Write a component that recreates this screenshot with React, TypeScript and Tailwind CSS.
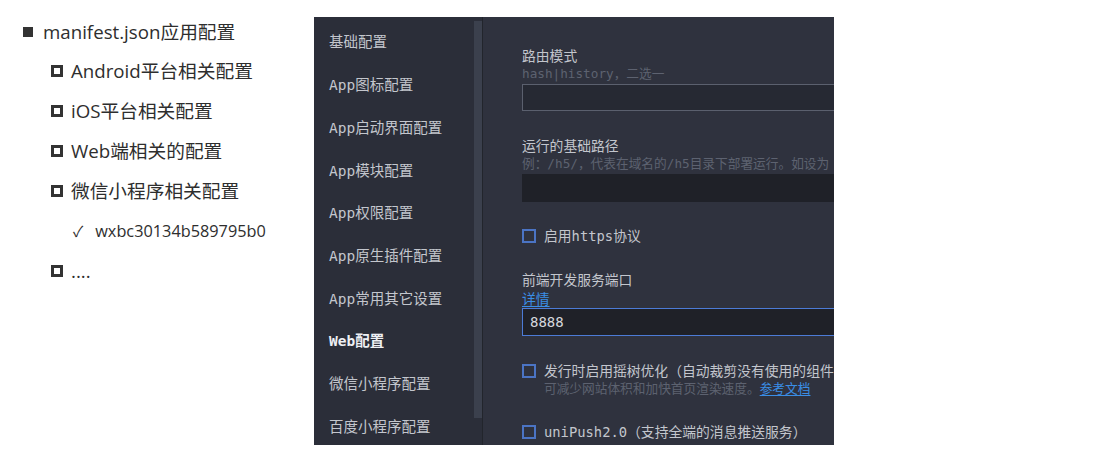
const sans = "font-['Open_Sans','Noto_Sans_CJK_SC',sans-serif]";
const mono = "font-['DejaVu_Sans_Mono','Noto_Sans_CJK_SC',monospace]";

const subItems = ['Android平台相关配置', 'iOS平台相关配置', 'Web端相关的配置', '微信小程序相关配置'];

const menu = [
  '基础配置',
  'App图标配置',
  'App启动界面配置',
  'App模块配置',
  'App权限配置',
  'App原生插件配置',
  'App常用其它设置',
  'Web配置',
  '微信小程序配置',
  '百度小程序配置',
];

function Box() {
  return <span className="inline-block w-[14px] h-[14px] border-2 border-[#4b74c4] shrink-0" />;
}

function Outline() {
  return <span className="inline-block w-[12px] h-[12px] border-[3px] border-[#333] shrink-0" />;
}

export default function App() {
  return (
    <div className="w-[1118px] h-[470px] bg-white flex overflow-hidden">
      {/* slide bullet list */}
      <div className={`w-[314px] shrink-0 pt-[19px] pl-[23px] text-[#2e2e2e] ${sans}`}>
        <div className="flex items-center gap-[10px] h-[26px] text-[18.7px]">
          <span className="inline-block w-[10px] h-[10px] bg-[#333]" />
          <span>manifest.json应用配置</span>
        </div>
        <div className="pl-[28px] mt-[13px] flex flex-col">
          {subItems.map(t => (
            <div key={t} className="flex items-center gap-[8px] h-[26px] mb-[14px] text-[18.7px]">
              <Outline />
              <span>{t}</span>
            </div>
          ))}
          <div className="flex items-center gap-[12px] h-[26px] mb-[14px] pl-[22px] text-[16.3px]">
            <span className="text-[15px]">✓</span>
            <span>wxbc30134b589795b0</span>
          </div>
          <div className="flex items-center gap-[8px] h-[26px] text-[18.7px]">
            <Outline />
            <span>....</span>
          </div>
        </div>
      </div>

      {/* screenshot of the HBuilderX manifest editor */}
      <div className={`mt-[17px] w-[520px] h-[428px] flex bg-[#2f323e] overflow-hidden ${mono}`}>
        <div className="w-[160px] shrink-0 bg-[#2b2e39] pl-[15px] pt-[5px] flex flex-col overflow-hidden">
          {menu.map(m => (
            <div
              key={m}
              className={`h-[42.7px] shrink-0 flex items-center text-[14.5px] whitespace-nowrap ${
                m === 'Web配置' ? 'text-[#eef0f4] font-bold' : 'text-[#c3c6cd]'
              }`}
            >
              {m}
            </div>
          ))}
        </div>
        <div className="w-[8px] shrink-0 bg-[#2b2e39] pt-[4px] pb-[27px] flex">
          <div className="w-full bg-[#3b404d]" />
        </div>
        <div className="w-px shrink-0 bg-[#22252c]" />
        <div className="flex-1 min-w-0 pl-[39px] pt-[30px] text-[#c3c6cd] text-[13.8px]">
          <div className="h-[18px] leading-[18px] whitespace-nowrap">路由模式</div>
          <div className="h-[17px] leading-[17px] text-[12.7px] text-[#5d6270] whitespace-nowrap">hash|history，二选一</div>
          <div className="h-[27px] mt-[2px] border border-[#5b606e] border-r-0 bg-[#262933]" />

          <div className="h-[18px] leading-[18px] mt-[26px] whitespace-nowrap">运行的基础路径</div>
          <div className="h-[18px] leading-[18px] text-[12.7px] text-[#5d6270] whitespace-nowrap">
            例：/h5/，代表在域名的/h5目录下部署运行。如设为
          </div>
          <div className="h-[28px] mt-[1px] bg-[#1f2128]" />

          <div className="flex items-center gap-[8px] h-[18px] mt-[25px] whitespace-nowrap">
            <Box />
            <span>启用https协议</span>
          </div>

          <div className="h-[18px] leading-[18px] mt-[26px] whitespace-nowrap">前端开发服务端口</div>
          <div className="h-[18px] leading-[18px] mt-[1px] text-[#3a8ee6] underline underline-offset-2">详情</div>
          <div className="h-[28px] border border-[#4c7bd6] border-r-0 bg-[#1f2128] flex items-center pl-[7px] text-[#d6d8dd] text-[14px]">
            8888
          </div>

          <div className="flex items-center gap-[8px] h-[18px] mt-[26px] whitespace-nowrap">
            <Box />
            <span>发行时启用摇树优化（自动裁剪没有使用的组件</span>
          </div>
          <div className="h-[18px] leading-[18px] pl-[22px] text-[12.7px] text-[#5d6270] whitespace-nowrap">
            可减少网站体积和加快首页渲染速度。
            <span className="text-[#3a8ee6] underline underline-offset-2">参考文档</span>
          </div>

          <div className="flex items-center gap-[8px] h-[18px] mt-[25px] whitespace-nowrap">
            <Box />
            <span>uniPush2.0（支持全端的消息推送服务）</span>
          </div>
        </div>
      </div>
    </div>
  );
}
